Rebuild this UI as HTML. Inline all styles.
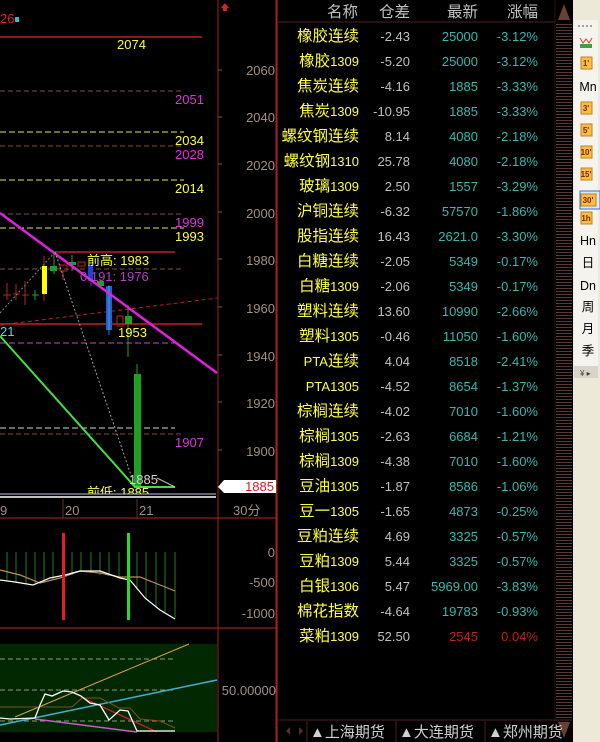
<!DOCTYPE html>
<html><head><meta charset="utf-8"><style>
html,body{margin:0;padding:0;background:#000;width:600px;height:742px;overflow:hidden}
svg{display:block}
text{font-family:"Liberation Sans","Noto Sans CJK SC",sans-serif}
.c{font-size:15.5px}
</style></head><body>
<svg width="600" height="742" viewBox="0 0 600 742" xmlns="http://www.w3.org/2000/svg">
<rect width="600" height="742" fill="#000"/>
<g font-size="13">
<text x="0" y="23" fill="#e02020">26</text><rect x="15" y="17" width="4" height="5" fill="#30c0c0"/>
<line x1="0" y1="37" x2="202" y2="37" stroke="#c02020" stroke-width="1.5"/>
<text x="117" y="49" fill="#ffff40">2074</text>
<line x1="0" y1="91" x2="184" y2="91" stroke="#80503a" stroke-dasharray="5,3"/>
<text x="175" y="104" fill="#e030e0">2051</text>
<line x1="0" y1="132" x2="184" y2="132" stroke="#e8e840" stroke-dasharray="6,3"/>
<text x="175" y="145" fill="#ffff40">2034</text>
<line x1="0" y1="146" x2="184" y2="146" stroke="#80503a" stroke-dasharray="5,3"/>
<text x="175" y="159" fill="#e030e0">2028</text>
<line x1="0" y1="180" x2="184" y2="180" stroke="#e8e840" stroke-dasharray="6,3"/>
<text x="175" y="193" fill="#ffff40">2014</text>
<line x1="0" y1="214" x2="184" y2="214" stroke="#80503a" stroke-dasharray="5,3"/>
<text x="175" y="227" fill="#e030e0">1999</text>
<line x1="0" y1="228" x2="184" y2="228" stroke="#e8e840" stroke-dasharray="6,3"/>
<text x="175" y="241" fill="#ffff40">1993</text>
<line x1="55" y1="252" x2="175" y2="252" stroke="#c02020" stroke-width="1.5"/>
<line x1="0" y1="269" x2="184" y2="269" stroke="#80503a" stroke-dasharray="5,3"/>
<line x1="0" y1="325" x2="218" y2="298" stroke="#c02020" stroke-dasharray="4,3"/>
<line x1="0" y1="324" x2="202" y2="324" stroke="#c02020" stroke-width="1.5"/>
<line x1="0" y1="343" x2="175" y2="343" stroke="#d040d0" stroke-dasharray="6,3"/>
<line x1="0" y1="428" x2="175" y2="428" stroke="#c0e0e0" stroke-dasharray="6,3"/>
<line x1="0" y1="434" x2="184" y2="434" stroke="#80503a" stroke-dasharray="5,3"/>
<text x="175" y="447" fill="#e030e0">1907</text>
<g stroke-width="1">
<line x1="7" y1="283" x2="7" y2="300" stroke="#c02020"/><line x1="3" y1="295" x2="11" y2="295" stroke="#c02020"/>
<line x1="16" y1="284" x2="16" y2="300" stroke="#c02020"/><line x1="13" y1="294" x2="20" y2="294" stroke="#c02020"/>
<line x1="25" y1="281" x2="25" y2="305" stroke="#c02020"/><line x1="22" y1="295" x2="29" y2="295" stroke="#c02020"/>
<line x1="35" y1="290" x2="35" y2="300" stroke="#20a020"/><line x1="32" y1="295" x2="39" y2="295" stroke="#20a020"/>
<line x1="44" y1="256" x2="44" y2="301" stroke="#c02020"/><rect x="42" y="266" width="5" height="28" fill="#ffff00"/>
<line x1="54" y1="252" x2="54" y2="274" stroke="#20a020"/><rect x="50" y="266" width="7" height="5" fill="#20a020"/>
<rect x="60" y="265" width="7" height="6" fill="none" stroke="#c02020"/><line x1="63" y1="271" x2="63" y2="280" stroke="#c02020"/>
<line x1="72" y1="255" x2="72" y2="271" stroke="#20a020"/><rect x="69" y="262" width="7" height="3" fill="#20a020"/>
<rect x="78" y="262" width="7" height="4" fill="none" stroke="#c02020"/>
<line x1="91" y1="263" x2="91" y2="286" stroke="#2040e0"/><rect x="88" y="265" width="5" height="15" fill="#2040e0"/>
<rect x="97" y="281" width="7" height="5" fill="#20a020"/>
<line x1="109" y1="285" x2="109" y2="335" stroke="#2080e0"/><rect x="106" y="286" width="6" height="44" fill="#2060e0"/><rect x="108" y="286" width="2" height="44" fill="#4080c0"/>
<rect x="117" y="316" width="6" height="10" fill="none" stroke="#c02020"/>
<line x1="128" y1="305" x2="128" y2="357" stroke="#20a020"/><rect x="125" y="316" width="7" height="8" fill="#20a020"/>
<line x1="137" y1="364" x2="137" y2="490" stroke="#20a020"/><rect x="134" y="374" width="7" height="113" fill="#20a020"/>
</g>
<line x1="0" y1="213" x2="217" y2="373" stroke="#e020e0" stroke-width="2.5"/>
<polyline points="0,336 135,487 175,487" fill="none" stroke="#40e040" stroke-width="2"/>
<line x1="55" y1="252" x2="135" y2="487" stroke="#a0a0a0" stroke-dasharray="2,2"/>
<line x1="0" y1="313" x2="55" y2="252" stroke="#808080" stroke-dasharray="2,2"/>
<line x1="157" y1="478" x2="175" y2="487" stroke="#c0c0c0"/>
<text x="87" y="265" fill="#ffff40">前高: 1983</text>
<text x="80" y="281" fill="#b040c0">0.191: 1976</text>
<text x="118" y="337" fill="#ffff40">1953</text>
<text x="0" y="336" fill="#60d0e0">21</text>
<text x="129" y="484" fill="#d0d0d0">1885</text>
<text x="87" y="497" fill="#ffff40">前低: 1885</text>
<rect x="0" y="494" width="218" height="5" fill="#000"/>
<line x1="0" y1="494" x2="216" y2="494" stroke="#c0c0e0"/>
<line x1="0" y1="497" x2="216" y2="497" stroke="#ffffff" stroke-width="1.5"/>
<line x1="63" y1="499" x2="63" y2="518" stroke="#603030"/><line x1="137" y1="499" x2="137" y2="518" stroke="#603030"/>
<text x="0" y="515" fill="#a09080">9</text><text x="65" y="515" fill="#a09080">20</text><text x="139" y="515" fill="#a09080">21</text>
<text x="233" y="515" fill="#a09080">30分</text>
<line x1="0" y1="518" x2="276" y2="518" stroke="#c02020"/>
<line x1="218" y1="0" x2="218" y2="742" stroke="#a02020"/>
<line x1="276" y1="0" x2="276" y2="742" stroke="#a02020"/>
<g fill="#a09080" text-anchor="end" font-size="13">
<text x="275" y="75">2060</text><text x="275" y="122">2040</text><text x="275" y="170">2020</text><text x="275" y="218">2000</text><text x="275" y="265">1980</text><text x="275" y="313">1960</text><text x="275" y="361">1940</text><text x="275" y="408">1920</text><text x="275" y="456">1900</text>
<text x="275" y="557">0</text><text x="275" y="587">-500</text><text x="275" y="618">-1000</text>
<text x="276" y="695">50.00000</text>
</g>
<g stroke="#805040"><line x1="218" y1="70" x2="222" y2="70"/><line x1="218" y1="117" x2="222" y2="117"/><line x1="218" y1="164" x2="222" y2="164"/><line x1="218" y1="212" x2="222" y2="212"/><line x1="218" y1="259" x2="222" y2="259"/><line x1="218" y1="307" x2="222" y2="307"/><line x1="218" y1="355" x2="222" y2="355"/><line x1="218" y1="402" x2="222" y2="402"/><line x1="218" y1="450" x2="222" y2="450"/></g>
<path d="M221,8 l4,-5 l4,5 z M223,8 h4 v3 h-4z" fill="#e02020"/>
<polygon points="218,487 224,480 276,480 276,493 224,493" fill="#fff"/>
<text x="274" y="491" fill="#d02020" text-anchor="end">1885</text>
</g>
<g stroke="#208020">
<line x1="7" y1="552" x2="7" y2="580"/><line x1="16" y1="552" x2="16" y2="583"/><line x1="26" y1="552" x2="26" y2="584"/><line x1="35" y1="552" x2="35" y2="585"/><line x1="44" y1="552" x2="44" y2="583"/><line x1="53" y1="552" x2="53" y2="580"/><line x1="72" y1="552" x2="72" y2="575"/><line x1="81" y1="552" x2="81" y2="572"/><line x1="91" y1="552" x2="91" y2="572"/><line x1="100" y1="552" x2="100" y2="575"/><line x1="109" y1="552" x2="109" y2="576"/><line x1="119" y1="552" x2="119" y2="577"/><line x1="137" y1="552" x2="137" y2="590"/><line x1="146" y1="552" x2="146" y2="600"/><line x1="156" y1="552" x2="156" y2="607"/><line x1="165" y1="552" x2="165" y2="612"/><line x1="175" y1="552" x2="175" y2="618"/>
</g>
<polyline points="0,570 20,575 40,583 60,578 80,571 100,573 120,577 140,577 160,585 175,591" fill="none" stroke="#c09050" stroke-width="1.2"/>
<polyline points="0,580 15,582 33,585 50,578 65,575 80,571 100,571 120,578 130,580 145,598 160,610 175,619" fill="none" stroke="#ffffff" stroke-width="1.2"/>
<rect x="62" y="533" width="3" height="87" fill="#e02020"/>
<rect x="127" y="533" width="3" height="87" fill="#20e020"/>
<line x1="0" y1="628" x2="276" y2="628" stroke="#c02020"/>
<rect x="0" y="644" width="217" height="88" fill="#012801"/>
<g stroke="#8a9a80" stroke-dasharray="5,3"><line x1="0" y1="659" x2="175" y2="659"/><line x1="0" y1="690" x2="175" y2="690"/><line x1="0" y1="721" x2="175" y2="721"/></g>
<line x1="15" y1="717" x2="189" y2="644" stroke="#e0a040"/>
<line x1="0" y1="725" x2="217" y2="680" stroke="#40b0d0" stroke-width="1.5"/>
<polyline points="0,707 72,707 82,698 100,698 119,708 130,708 140,719 160,721 175,728" fill="none" stroke="#805020"/>
<polyline points="81,697 157,732" fill="none" stroke="#c02020" stroke-width="1.5"/>
<polyline points="35,719 137,732" fill="none" stroke="#c060c0" stroke-width="1.5"/>
<polyline points="0,718 10,719 35,718 40,705 45,694 52,696 63,691 72,692 81,696 90,703 100,705 109,720 120,710 128,711 137,731 175,731" fill="none" stroke="#ffffff" stroke-width="1.3"/>
<!-- table -->
<line x1="277" y1="0" x2="277" y2="742" stroke="#c02020"/>
<line x1="277" y1="22" x2="555" y2="22" stroke="#502020"/>
<g font-size="15.5" text-anchor="end" fill="#c0c0c0">
<text x="358" y="17">名称</text><text x="410" y="17">仓差</text><text x="478" y="17">最新</text><text x="538" y="17">涨幅</text>
</g>
<g font-size="13" text-anchor="end">
<g fill="#ffff40">
<text x="359" y="41"><tspan class="c">橡胶连续</tspan></text>
<text x="359" y="66"><tspan class="c">橡胶</tspan>1309</text>
<text x="359" y="91"><tspan class="c">焦炭连续</tspan></text>
<text x="359" y="116"><tspan class="c">焦炭</tspan>1309</text>
<text x="359" y="141"><tspan class="c">螺纹钢连续</tspan></text>
<text x="359" y="166"><tspan class="c">螺纹钢</tspan>1310</text>
<text x="359" y="191"><tspan class="c">玻璃</tspan>1309</text>
<text x="359" y="216"><tspan class="c">沪铜连续</tspan></text>
<text x="359" y="241"><tspan class="c">股指连续</tspan></text>
<text x="359" y="266"><tspan class="c">白糖连续</tspan></text>
<text x="359" y="291"><tspan class="c">白糖</tspan>1309</text>
<text x="359" y="316"><tspan class="c">塑料连续</tspan></text>
<text x="359" y="341"><tspan class="c">塑料</tspan>1305</text>
<text x="359" y="366">PTA<tspan class="c">连续</tspan></text>
<text x="359" y="391">PTA1305</text>
<text x="359" y="416"><tspan class="c">棕榈连续</tspan></text>
<text x="359" y="441"><tspan class="c">棕榈</tspan>1305</text>
<text x="359" y="466"><tspan class="c">棕榈</tspan>1309</text>
<text x="359" y="491"><tspan class="c">豆油</tspan>1305</text>
<text x="359" y="516"><tspan class="c">豆一</tspan>1305</text>
<text x="359" y="541"><tspan class="c">豆粕连续</tspan></text>
<text x="359" y="566"><tspan class="c">豆粕</tspan>1309</text>
<text x="359" y="591"><tspan class="c">白银</tspan>1306</text>
<text x="359" y="616"><tspan class="c">棉花指数</tspan></text>
<text x="359" y="641"><tspan class="c">菜粕</tspan>1309</text>
</g>
<g fill="#c0c0c0">
<text x="410" y="41">-2.43</text><text x="410" y="66">-5.20</text><text x="410" y="91">-4.16</text><text x="410" y="116">-10.95</text><text x="410" y="141">8.14</text><text x="410" y="166">25.78</text><text x="410" y="191">2.50</text><text x="410" y="216">-6.32</text><text x="410" y="241">16.43</text><text x="410" y="266">-2.05</text><text x="410" y="291">-2.06</text><text x="410" y="316">13.60</text><text x="410" y="341">-0.46</text><text x="410" y="366">4.04</text><text x="410" y="391">-4.52</text><text x="410" y="416">-4.02</text><text x="410" y="441">-2.63</text><text x="410" y="466">-4.38</text><text x="410" y="491">-1.87</text><text x="410" y="516">-1.65</text><text x="410" y="541">4.69</text><text x="410" y="566">5.44</text><text x="410" y="591">5.47</text><text x="410" y="616">-4.64</text><text x="410" y="641">52.50</text>
</g>
<g fill="#38b8b0">
<text x="478" y="41">25000</text><text x="478" y="66">25000</text><text x="478" y="91">1885</text><text x="478" y="116">1885</text><text x="478" y="141">4080</text><text x="478" y="166">4080</text><text x="478" y="191">1557</text><text x="478" y="216">57570</text><text x="478" y="241">2621.0</text><text x="478" y="266">5349</text><text x="478" y="291">5349</text><text x="478" y="316">10990</text><text x="478" y="341">11050</text><text x="478" y="366">8518</text><text x="478" y="391">8654</text><text x="478" y="416">7010</text><text x="478" y="441">6684</text><text x="478" y="466">7010</text><text x="478" y="491">8586</text><text x="478" y="516">4873</text><text x="478" y="541">3325</text><text x="478" y="566">3325</text><text x="478" y="591">5969.00</text><text x="478" y="616">19783</text>
<text x="538" y="41">-3.12%</text><text x="538" y="66">-3.12%</text><text x="538" y="91">-3.33%</text><text x="538" y="116">-3.33%</text><text x="538" y="141">-2.18%</text><text x="538" y="166">-2.18%</text><text x="538" y="191">-3.29%</text><text x="538" y="216">-1.86%</text><text x="538" y="241">-3.30%</text><text x="538" y="266">-0.17%</text><text x="538" y="291">-0.17%</text><text x="538" y="316">-2.66%</text><text x="538" y="341">-1.60%</text><text x="538" y="366">-2.41%</text><text x="538" y="391">-1.37%</text><text x="538" y="416">-1.60%</text><text x="538" y="441">-1.21%</text><text x="538" y="466">-1.60%</text><text x="538" y="491">-1.06%</text><text x="538" y="516">-0.25%</text><text x="538" y="541">-0.57%</text><text x="538" y="566">-0.57%</text><text x="538" y="591">-3.83%</text><text x="538" y="616">-0.93%</text>
</g>
<g fill="#c02020"><text x="478" y="641">2545</text><text x="538" y="641">0.04%</text></g>
</g>
<line x1="555" y1="0" x2="555" y2="742" stroke="#301010"/>
<defs><pattern id="stripes" width="16" height="3" patternUnits="userSpaceOnUse"><rect width="16" height="3" fill="#000"/><rect width="16" height="1" fill="#5a3a2a"/></pattern></defs>
<rect x="556" y="22" width="16" height="696" fill="url(#stripes)"/>
<polygon points="564,4 558,20 570,20" fill="#6a4030"/>
<polygon points="558,722 570,722 564,738" fill="#6a4030"/>
<rect x="278" y="720" width="277" height="22" fill="#000"/>
<line x1="278" y1="720" x2="572" y2="720" stroke="#502020"/>
<polygon points="286,731 290,727 290,735" fill="#503030"/><polygon points="299,727 303,731 299,735" fill="#503030"/>
<line x1="307" y1="721" x2="307" y2="742" stroke="#502020"/><line x1="396" y1="721" x2="396" y2="742" stroke="#502020"/><line x1="485" y1="721" x2="485" y2="742" stroke="#502020"/>
<g font-size="15" fill="#d0d0d0"><text x="310" y="737">▲上海期货</text><text x="399" y="737">▲大连期货</text><text x="488" y="737">▲郑州期货</text></g>
<rect x="573" y="0" width="27" height="742" fill="#ece9d8"/>
<rect x="574" y="20" width="24" height="358" fill="#f4f3ee"/>
<g fill="#a0a0a0"><rect x="578" y="25" width="2" height="2"/><rect x="582" y="25" width="2" height="2"/><rect x="586" y="25" width="2" height="2"/><rect x="590" y="25" width="2" height="2"/></g>
<path d="M580,38 l3,5 l3,-4 l3,4 l3,-5" fill="none" stroke="#d04020"/><rect x="580" y="44" width="12" height="4" fill="#40a040"/>
<rect x="580" y="191" width="20" height="18" fill="#dce8f8" stroke="#4070c0"/>
<g font-size="8" font-weight="bold" fill="#802000" text-anchor="middle">
<rect x="581" y="57" width="11" height="12" fill="#f8c040" stroke="#c08020"/><text x="586" y="66">1'</text>
<rect x="581" y="102" width="11" height="12" fill="#f8c040" stroke="#c08020"/><text x="586" y="111">3'</text>
<rect x="581" y="124" width="11" height="12" fill="#f8c040" stroke="#c08020"/><text x="586" y="133">5'</text>
<rect x="581" y="146" width="11" height="12" fill="#f8c040" stroke="#c08020"/><text x="586" y="155">10'</text>
<rect x="581" y="168" width="11" height="12" fill="#f8c040" stroke="#c08020"/><text x="586" y="177">15'</text>
<rect x="581" y="194" width="15" height="12" fill="#f8c040" stroke="#c08020"/><text x="588" y="203">30'</text>
<rect x="581" y="212" width="11" height="12" fill="#f8c040" stroke="#c08020"/><text x="586" y="221">1h</text>
</g>
<g font-size="12.5" fill="#000" text-anchor="middle">
<text x="588" y="91">Mn</text><text x="588" y="245">Hn</text><text x="588" y="267">日</text><text x="588" y="290">Dn</text><text x="588" y="311">周</text><text x="588" y="333">月</text><text x="588" y="355">季</text>
</g>
<rect x="574" y="366" width="24" height="12" fill="#d8d4c8"/>
<text x="580" y="376" font-size="8" fill="#404040">¥ ▸</text>
</svg>
</body></html>
